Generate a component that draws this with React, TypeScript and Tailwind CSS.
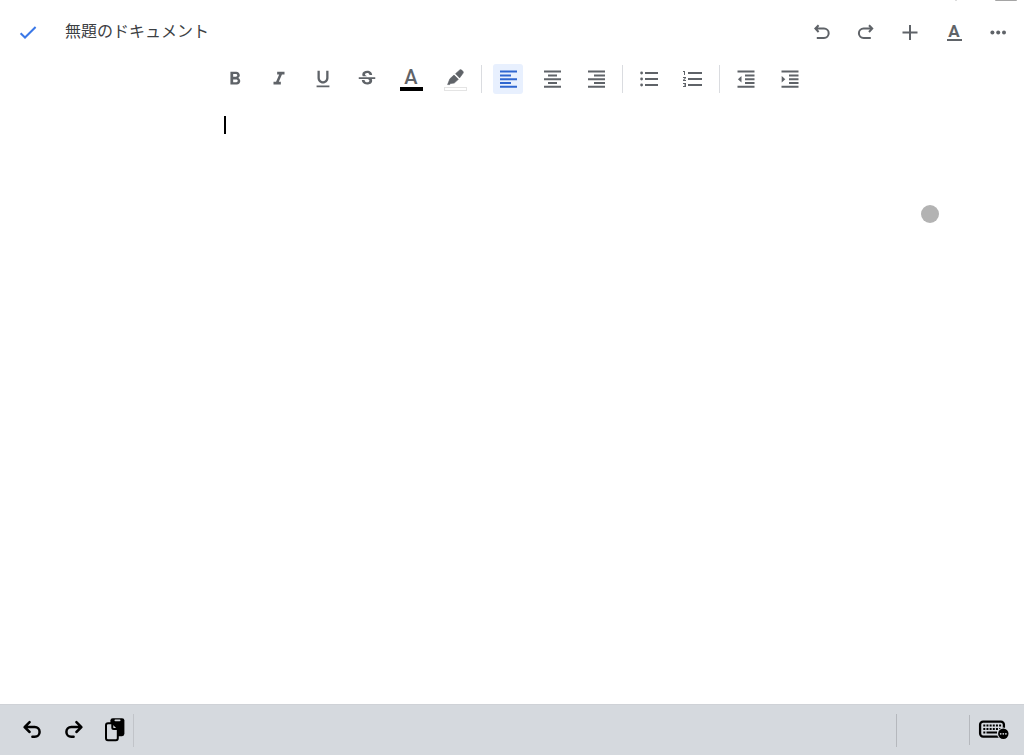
import { useState } from 'react';
import type { ReactNode } from 'react';
import { MdFormatBold, MdFormatItalic, MdFormatListNumbered, MdFormatUnderlined, MdStrikethroughS } from 'react-icons/md';

function Icon({ children, width = 2 }: { children: ReactNode; width?: number }) {
  return (
    <svg viewBox="0 0 24 24" className="size-6 shrink-0" fill="none" stroke="currentColor" strokeWidth={width} aria-hidden="true">
      {children}
    </svg>
  );
}

function HeaderButton({ label, children }: { label: string; children: ReactNode }) {
  return (
    <button type="button" aria-label={label} className="flex size-11 items-center justify-center">
      {children}
    </button>
  );
}

function Tool({ label, active = false, onClick, children }: { label: string; active?: boolean; onClick?: () => void; children: ReactNode }) {
  return (
    <button
      type="button"
      aria-label={label}
      aria-pressed={active}
      onClick={onClick}
      className={
        active
          ? 'flex size-[30px] items-center justify-center rounded-[3px] bg-[#e8f0fe] text-[#2f66d0]'
          : 'flex size-[30px] items-center justify-center rounded-[3px]'
      }
    >
      {children}
    </button>
  );
}

function Divider() {
  return <span className="mx-[11px] h-7 w-px bg-[#dadce0]" />;
}

const alignments = [
  { id: 'left', label: '左揃え', d: 'M4 4.6h17M4 8.4h11M4 12.2h17M4 16h11M4 19.8h17' },
  { id: 'center', label: '中央揃え', d: 'M4 4.6h17M8 8.4h9M4 12.2h17M8 16h9M4 19.8h17' },
  { id: 'right', label: '右揃え', d: 'M4 4.6h17M10 8.4h11M4 12.2h17M10 16h11M4 19.8h17' },
];

export default function App() {
  const [align, setAlign] = useState('left');
  const [text, setText] = useState('');

  return (
    <div className="relative flex min-h-screen flex-col overflow-hidden bg-white font-['Roboto','Noto_Sans_CJK_JP',sans-serif] text-[#5f6368]">
      <span className="absolute top-0 right-[7px] h-px w-[22px] rounded-b-sm bg-[#a5a5a5]" />
      <span className="absolute top-0 right-[67px] h-px w-0.5 bg-[#dddddd]" />

      <header className="flex h-16 items-center pr-1 pl-1.5">
        <button type="button" aria-label="完了" className="flex size-11 items-center justify-center text-[#3b78e7]">
          <Icon><path d="M4.6 13.2l4.4 4.3L19.6 7" /></Icon>
        </button>
        <h1 className="ml-[15px] flex-1 text-base leading-6 text-[#3c4043]">無題のドキュメント</h1>
        <HeaderButton label="元に戻す">
          <Icon>
            <path d="M8.6 5.2L5.4 8.6l3.2 3.4M5.6 8.6H14a4.7 4.7 0 0 1 0 9.4H6.8" />
          </Icon>
        </HeaderButton>
        <HeaderButton label="やり直し">
          <Icon>
            <path d="M15 5.2l3.2 3.4L15 12M18 8.6H9.6a4.7 4.7 0 0 0 0 9.4h7.2" />
          </Icon>
        </HeaderButton>
        <HeaderButton label="挿入">
          <Icon><path d="M12 5v15M4.5 12.5h15" /></Icon>
        </HeaderButton>
        <HeaderButton label="書式">
          <span className="flex flex-col items-center">
            <span className="text-[17px] leading-[14px] font-bold">A</span>
            <span className="mt-px h-0.5 w-[15px] bg-current" />
          </span>
        </HeaderButton>
        <HeaderButton label="その他">
          <Icon>
            <g fill="currentColor" stroke="none">
              <circle cx="6.4" cy="12.5" r="2" />
              <circle cx="12.2" cy="12.5" r="2" />
              <circle cx="18" cy="12.5" r="2" />
            </g>
          </Icon>
        </HeaderButton>
      </header>

      <div role="toolbar" aria-label="書式設定" className="flex h-[30px] items-center justify-center pl-px">
        <div className="flex gap-3.5">
          <Tool label="太字"><MdFormatBold size={22} /></Tool>
          <Tool label="斜体"><MdFormatItalic size={22} /></Tool>
          <Tool label="下線"><MdFormatUnderlined size={22} /></Tool>
          <Tool label="取り消し線"><MdStrikethroughS size={22} /></Tool>
          <Tool label="文字の色">
            <span className="flex flex-col items-center">
              <span className="text-xl leading-[19px] font-medium">A</span>
              <span className="h-1 w-[23px] bg-black" />
            </span>
          </Tool>
          <Tool label="ハイライトの色">
            <span className="flex flex-col items-center">
              <svg viewBox="0 0 18 18" className="size-[18px]" fill="currentColor" stroke="currentColor" strokeWidth="0.6" strokeLinejoin="round" aria-hidden="true">
                <path d="M1.6 16.6L3.9 10.8 8 7l4.4 4.3-4.2 3.8-3.5.4-1 1.1z" />
                <path d="M9.5 5.7l4.2-3.7q1-.8 2 .1l1.2 1.2q.9 1 .1 2l-3.4 4.6z" />
              </svg>
              <span className="mt-px h-1 w-[23px] border border-[#e4e4e4] bg-white" />
            </span>
          </Tool>
        </div>
        <Divider />
        <div className="flex gap-3.5">
          {alignments.map((item) => (
            <Tool key={item.id} label={item.label} active={align === item.id} onClick={() => setAlign(item.id)}>
              <Icon><path d={item.d} /></Icon>
            </Tool>
          ))}
        </div>
        <Divider />
        <div className="flex gap-3.5">
          <Tool label="箇条書き">
            <Icon>
              <path d="M8 6h13M8 12h13M8 18h13" />
              <g fill="currentColor" stroke="none">
                <circle cx="4.6" cy="6" r="1.4" />
                <circle cx="4.6" cy="12" r="1.4" />
                <circle cx="4.6" cy="18" r="1.4" />
              </g>
            </Icon>
          </Tool>
          <Tool label="番号付きリスト"><MdFormatListNumbered size={24} /></Tool>
        </div>
        <Divider />
        <div className="flex gap-3.5">
          <Tool label="インデント減">
            <Icon>
              <path d="M3.5 4.6h17M11 8.4h9.5M11 12.2h9.5M11 16h9.5M3.5 19.8h17" />
              <path d="M7.5 8.9v6.6L3.9 12.2z" fill="currentColor" stroke="none" />
            </Icon>
          </Tool>
          <Tool label="インデント増">
            <Icon>
              <path d="M3.5 4.6h17M11 8.4h9.5M11 12.2h9.5M11 16h9.5M3.5 19.8h17" />
              <path d="M3.7 8.9v6.6l3.6-3.3z" fill="currentColor" stroke="none" />
            </Icon>
          </Tool>
        </div>
      </div>

      <main className="relative mx-auto flex w-full max-w-[576px] flex-1 flex-col pt-5">
        {text === '' && <span className="pointer-events-none absolute top-[22px] left-0 h-[18px] w-0.5 bg-black" />}
        <textarea
          aria-label="ドキュメント本文"
          value={text}
          onChange={(event) => setText(event.target.value)}
          className="w-full flex-1 resize-none bg-transparent text-base text-black outline-none"
        />
      </main>

      <span className="pointer-events-none absolute top-[205px] right-[85px] size-[18px] rounded-full bg-[#b3b3b3]" />

      <footer className="flex h-[51px] items-center border-t border-[#cfd2d7] bg-[#d5d9de] pr-[14px] pl-5 text-black">
        <button type="button" aria-label="取り消す" className="flex size-6 items-center justify-center">
          <Icon width={2.5}>
            <path d="M9.6 4.2L4.6 9.1l5 4.9M5 9.1h9.8a4.8 4.8 0 0 1 0 9.6H12.4" strokeLinecap="round" strokeLinejoin="round" />
          </Icon>
        </button>
        <button type="button" aria-label="やり直す" className="ml-[17px] flex size-6 items-center justify-center">
          <Icon width={2.5}>
            <path d="M15.4 4.2l5 4.9-5 4.9M20 9.1h-9.8a4.8 4.8 0 0 0 0 9.6h2.4" strokeLinecap="round" strokeLinejoin="round" />
          </Icon>
        </button>
        <button type="button" aria-label="ペースト" className="ml-[18px] flex size-6 items-center justify-center">
          <Icon width={2}>
            <rect x="7.4" y="0.2" width="14" height="18" rx="2.4" fill="currentColor" stroke="none" />
            <rect x="11.5" y="1.5" width="6" height="1.7" rx=".8" fill="#d5d9de" stroke="none" />
            <path d="M5 5.2h4.7l5.1 5.2v9.8q0 2-2 2H5q-2 0-2-2v-13q0-2 2-2z" fill="#d5d9de" />
            <path d="M9.3 5.4v4.1q0 1.5 1.5 1.5h4" />
          </Icon>
        </button>
        <span className="ml-1.5 h-[33px] w-px bg-[#c1c4c9]" />
        <span className="flex-1" />
        <span className="h-[33px] w-px bg-[#b5b8bd]" />
        <span className="ml-[72px] h-[30px] w-px bg-[#b5b8bd]" />
        <button type="button" aria-label="キーボード" className="ml-2 flex h-6 w-8 items-center justify-center">
          <svg viewBox="0 0 32 24" className="h-6 w-8" aria-hidden="true">
            <rect x="2.1" y="3.6" width="23.8" height="15" rx="3" fill="none" stroke="#000" strokeWidth="2.3" />
            <path d="M5.3 7.6h17.8M5.3 11h17.8" stroke="#000" strokeWidth="2" strokeDasharray="2 1.16" />
            <path d="M5.3 14.6h2M8.5 14.6H19" stroke="#000" strokeWidth="2" />
            <circle cx="25.3" cy="15.8" r="6.2" fill="#d5d9de" />
            <circle cx="25.3" cy="15.8" r="5.2" />
            <g fill="#d5d9de">
              <circle cx="22.7" cy="15.8" r=".9" />
              <circle cx="25.3" cy="15.8" r=".9" />
              <circle cx="27.9" cy="15.8" r=".9" />
            </g>
          </svg>
        </button>
      </footer>
    </div>
  );
}
